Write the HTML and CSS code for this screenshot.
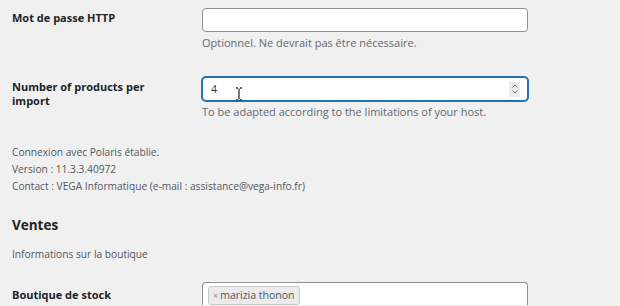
FILE: index.html
```html
<!DOCTYPE html>
<html lang="fr">
<head>
<meta charset="utf-8">
<link rel="stylesheet" href="styles.css">
</head>
<body>
<div class="page">
  <div class="row row-first">
    <div class="label">Mot de passe HTTP</div>
    <div class="field">
      <div class="input"></div>
      <p class="help">Optionnel. Ne devrait pas être nécessaire.</p>
    </div>
  </div>
  <div class="row row-second">
    <div class="label">Number of products per<br>import</div>
    <div class="field">
      <div class="input focused">
        <span class="value">4</span>
        <span class="spin">
          <svg width="8" height="12" viewBox="0 0 8 12"><path d="M1.5 4.5 L4 2 L6.5 4.5" fill="none" stroke="#7a7d82" stroke-width="1"/><path d="M1.5 7.5 L4 10 L6.5 7.5" fill="none" stroke="#7a7d82" stroke-width="1"/></svg>
        </span>
        <svg class="cursor" width="8" height="14" viewBox="0 0 8 14"><path d="M1 1 H3 M5 1 H7 M4 1.5 V12.5 M1 13 H3 M5 13 H7" fill="none" stroke="#333" stroke-width="1.3"/></svg>
      </div>
      <p class="help">To be adapted according to the limitations of your host.</p>
    </div>
  </div>
  <div class="info">
    <p>Connexion avec Polaris établie.</p>
    <p>Version : 11.3.3.40972</p>
    <p>Contact : VEGA Informatique (e-mail : assistance@vega-info.fr)</p>
  </div>
  <h2 class="section">Ventes</h2>
  <p class="intro">Informations sur la boutique</p>
  <div class="row row-stock">
    <div class="label">Boutique de stock</div>
    <div class="field">
      <div class="select">
        <span class="tag"><span class="x">×</span>marizia thonon</span>
      </div>
    </div>
  </div>
</div>
</body>
</html>
```

FILE: styles.css
```css
html, body {
  margin: 0;
  padding: 0;
  background: #f0f0f1;
  overflow: hidden;
}
body {
  font-family: "Open Sans", "Noto Sans", sans-serif;
  color: #1d2327;
  font-size: 11px;
}
.page {
  padding: 8px 0 0 12px;
}
.row {
  display: grid;
  grid-template-columns: 190px 326px;
}
.row-second {
  margin-top: 26px;
}
.label {
  font-weight: 700;
  font-size: 11px;
  line-height: 14px;
  padding-top: 3px;
}
.input {
  position: relative;
  height: 24px;
  box-sizing: border-box;
  border: 1px solid #8c8f94;
  border-radius: 4px;
  background: #fff;
  display: flex;
  align-items: center;
  padding: 0 8px;
}
.input.focused {
  border-color: #2271b1;
  box-shadow: 0 0 0 1px #2271b1;
}
.value {
  font-size: 10.5px;
  color: #2c3338;
}
.spin {
  margin-left: auto;
  width: 11px;
  height: 15px;
  background: #ececec;
  display: flex;
  align-items: center;
  justify-content: center;
  margin-right: -1px;
}
.cursor {
  position: absolute;
  left: 32px;
  top: 9px;
}
.help {
  margin: 3px 0 0;
  line-height: 16px;
  color: #646970;
  font-size: 11px;
}
.info {
  margin-top: 24px;
  color: #50575e;
  font-size: 10.2px;
  line-height: 17px;
}
.info p {
  margin: 0;
}
.section {
  margin: 20px 0 0;
  font-size: 13.5px;
  line-height: 20px;
  font-weight: 700;
  color: #1d2327;
}
.intro {
  margin: 11px 0 0;
  line-height: 16px;
  color: #50575e;
  font-size: 10.2px;
}
.row-stock {
  margin-top: 20px;
}
.row-stock .label {
  padding-top: 6px;
}
.select {
  height: 23px;
  box-sizing: border-box;
  border: 1px solid #8c8f94;
  border-bottom: 0;
  border-radius: 4px 4px 0 0;
  background: #fff;
  padding: 3px 5px 0;
}
.tag {
  display: inline-block;
  background: #ebebeb;
  border: 1px solid #c8c8c8;
  border-radius: 3px;
  padding: 0 5px 0 4px;
  line-height: 17px;
  font-size: 10.5px;
  color: #50575e;
}
.x {
  color: #8c8f94;
  margin-right: 2px;
  font-size: 9px;
}
```
